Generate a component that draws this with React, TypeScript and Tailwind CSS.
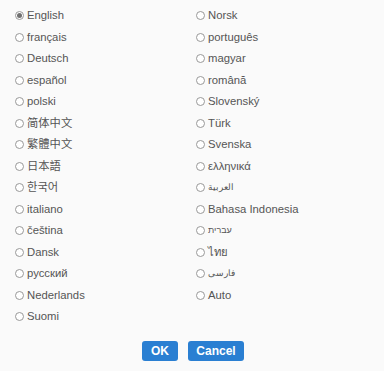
const left = ["English", "français", "Deutsch", "español", "polski", "简体中文", "繁體中文", "日本語", "한국어", "italiano", "čeština", "Dansk", "русский", "Nederlands", "Suomi"];
const right = ["Norsk", "português", "magyar", "română", "Slovenský", "Türk", "Svenska", "ελληνικά", "العربية", "Bahasa Indonesia", "עברית", "ไทย", "فارسی", "Auto"];
const small = ["العربية", "فارسی", "עברית"];

function Option({ label, checked }: { label: string; checked?: boolean }) {
  return (
    <label className="flex items-center h-[21.5px] cursor-pointer">
      <span className="w-[9px] h-[9px] rounded-full border border-[#999] bg-white flex items-center justify-center">
        {checked && <span className="w-[5px] h-[5px] rounded-full bg-[#707070]"></span>}
      </span>
      <span className={small.includes(label) ? "ml-[3px] text-[9px] leading-none text-[#555]" : "ml-[3px] text-[11.3px] leading-none text-[#555]"}>{label}</span>
    </label>
  );
}

export default function App() {
  return (
    <div className="w-[384px] h-[371px] bg-[#fafafa] font-['Liberation_Sans','Noto_Sans','Noto_Sans_CJK_SC',sans-serif]">
      <div className="flex pl-[15px] pt-[5px]">
        <div className="w-[181px]">
          {left.map((l, i) => (
            <Option key={l} label={l} checked={i === 0} />
          ))}
        </div>
        <div className="w-[180px]">
          {right.map((l) => (
            <Option key={l} label={l} />
          ))}
        </div>
      </div>
      <div className="flex justify-center gap-[10px] mt-[13px] pl-[2px]">
        <button className="w-[36px] h-[20px] rounded-[3px] bg-[#2a7fd2] text-white text-[12px] font-bold">OK</button>
        <button className="w-[56px] h-[20px] rounded-[3px] bg-[#2a7fd2] text-white text-[12px] font-bold">Cancel</button>
      </div>
    </div>
  );
}
